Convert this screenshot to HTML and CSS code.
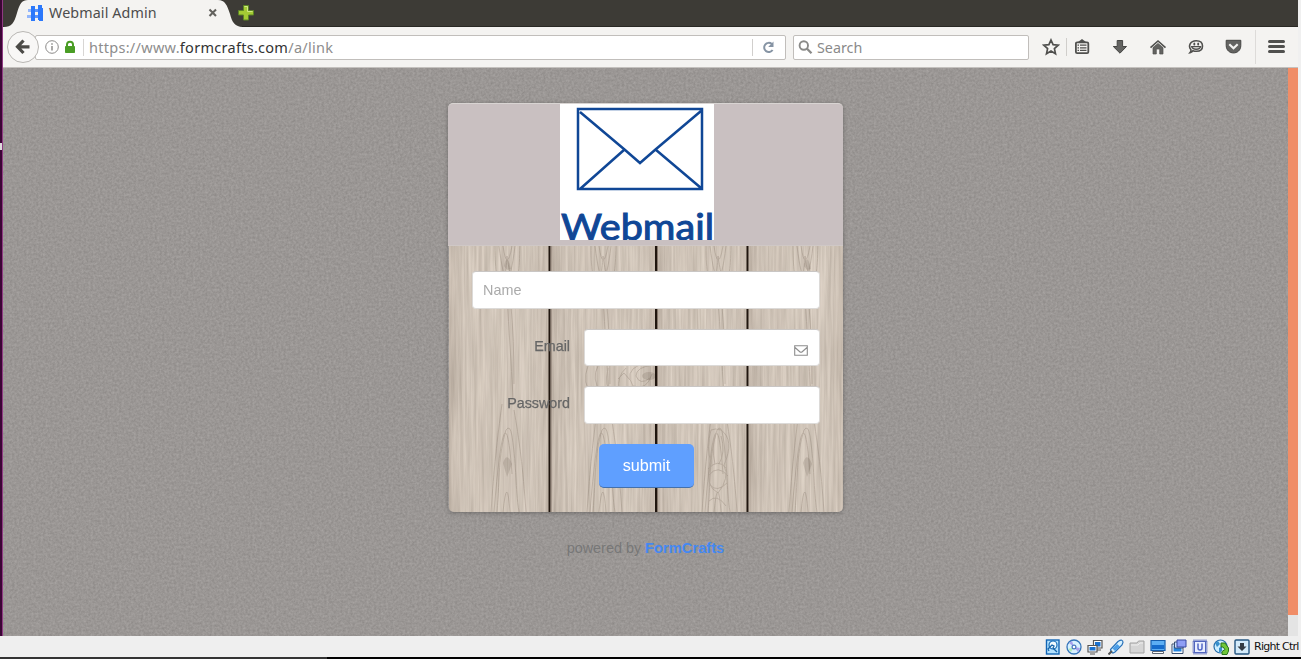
FILE: index.html
```html
<!DOCTYPE html>
<html lang="en">
<head>
<meta charset="utf-8">
<title>Desktop</title>
<link rel="stylesheet" href="styles.css">
</head>
<body>
<div class="screen">
  <div class="upper">
    <div class="launcher"><span class="launcher-arrow"></span></div>
    <div class="browser">
      <div class="tabs">
        <svg class="tab-shape" width="240" height="27" viewBox="0 0 240 27"><path d="M0 27C9 27 11 23 14 13C17 3 19 0 25 0H215C222 0 224 5 227 14C229 22 232 27 240 27Z" fill="#f4f3f1"/></svg>
        <div class="tab">
          <svg class="favicon" width="16" height="16" viewBox="0 0 16 16" shape-rendering="crispEdges"><path d="M1 4H16V7H1ZM0 10H15V13H0Z" fill="#94b7fb"/><path d="M4 1H8V16H4ZM11 0H15V15H11ZM12 3H16V16H12Z" fill="#2b78fb"/><path d="M8 4H11V7H8ZM8 10H11V13H8Z" fill="#5b95fc"/></svg>
          <span class="tab-title">Webmail Admin</span>
          <svg class="tab-close" width="10" height="10" viewBox="0 0 10 10"><path d="M1.5 1.500L8 8M8 1.500L1.500 8" stroke="#62615d" stroke-width="2.1"/></svg>
        </div>
        <svg class="plus" width="18" height="18" viewBox="0 0 18 18"><path d="M6.500 1.500H11.500V6.500H16.500V11H11.500V16H6.500V11H1.500V6.500H6.500Z" fill="#a4cb34" stroke="#5c8525"/><path d="M7.500 2.500H10.500V7.500H15.500" fill="none" stroke="#d0e884"/></svg>
      </div>
      <div class="toolbar">
        <div class="back"><svg width="18" height="18" viewBox="0 0 18 18"><path d="M9.500 2.500L3.500 8.800L9.500 15M4 8.800H15.500" fill="none" stroke="#4b4a47" stroke-width="3.2"/></svg></div>
        <div class="url">
          <svg width="14" height="14" viewBox="0 0 14 14"><circle cx="7" cy="7" r="6.3" fill="none" stroke="#8c8b89"/><path d="M7 6V10.500M7 3.300V4.800" stroke="#858482" stroke-width="1.4"/></svg>
          <svg class="lock" width="12" height="14" viewBox="0 0 12 14"><path d="M3 7V4.500C3 .7 9 .7 9 4.500V7" fill="none" stroke="#4a9d25" stroke-width="2"/><rect x="1" y="6" width="10" height="7" rx=".8" fill="#4a9d25"/></svg>
          <span class="address">https://www.<b>formcrafts.com</b>/a/link</span>
          <span class="reload"><svg width="15" height="15" viewBox="0 0 15 15"><path d="M10.800 4A4.600 4.600 0 1 0 11.600 10" fill="none" stroke="#8694a4" stroke-width="2"/><path d="M12.500 1.500V7H7.200Z" fill="#8694a4"/></svg></span>
        </div>
        <div class="search"><svg width="15" height="15" viewBox="0 0 15 15"><circle cx="5.800" cy="5.500" r="4.200" fill="none" stroke="#8a8a88" stroke-width="1.9"/><path d="M8.800 8.500L13.500 13.200" stroke="#8a8a88" stroke-width="2.3"/></svg><span>Search</span></div>
        <div class="actions">
          <svg width="18" height="18" viewBox="0 0 18 18"><path d="M9 2L11.100 6.700L16.200 7.200L12.400 10.600L13.500 15.800L9 13.100L4.500 15.800L5.600 10.600L1.800 7.200L6.900 6.700Z" fill="none" stroke="#50504e" stroke-width="1.7"/></svg>
          <i class="short-line"></i>
          <svg width="16" height="16" viewBox="0 0 16 16"><rect x="1.900" y="3.400" width="12.400" height="10.800" rx="1.2" fill="#f4f3f1" stroke="#50504e" stroke-width="1.8"/><path d="M4 3L8 0L12 3Z" fill="#50504e"/><path d="M3.500 6.200H5M6 6.200H12.500M3.500 8.800H5M6 8.800H12.500M3.500 11.400H5M6 11.400H12.500" stroke="#50504e" stroke-width="1.2"/></svg>
          <svg class="download" width="16" height="16" viewBox="0 0 16 16"><path d="M5.200 1.500H10.600V7.500H14.500L8 14.200L1.300 7.500H5.200Z" fill="#636361" stroke="#454543"/></svg>
          <svg class="home" width="18" height="16" viewBox="0 0 18 16"><path d="M1.500 8.700L9 2L16.500 8.700" fill="none" stroke="#50504e" stroke-width="1.6"/><path d="M4 8.600L9 4.400L14 8.600V15H10.700V10H7.300V15H4Z" fill="#636361" stroke="#50504e" stroke-width=".7"/></svg>
          <svg class="chat" width="16" height="16" viewBox="0 0 16 16"><path d="M8.200 1.800C12.500 1.800 14.500 4.200 14.500 7C14.500 10.500 12 12.300 8.400 12.300C7 12.300 6 12.100 5 11.700C4.400 12.900 3.600 13.400 2.100 13.600C2.900 12.700 3.200 11.700 2.800 10.500C.1 7.200 2 1.800 8.200 1.800Z" fill="#f4f3f1" stroke="#50504e" stroke-width="1.6"/><path d="M2.800 6.900H13.400Q12.800 11 8.200 11Q3.600 11 2.800 6.900Z" fill="#50504e"/><path d="M4.500 8.300H12Q8.200 10.800 4.500 8.300Z" fill="#f4f3f1"/><ellipse cx="6.300" cy="5.100" rx="1" ry="1.500" fill="#50504e"/><ellipse cx="10.200" cy="5.100" rx="1" ry="1.500" fill="#50504e"/></svg>
          <svg class="pocket" width="17" height="16" viewBox="0 0 17 16"><path d="M1.200 1.300H15.800V6.500C15.800 16.400 1.200 16.400 1.200 6.500Z" fill="#636361" stroke="#454543"/><path d="M4.300 5.300L8.500 9.200L12.700 5.300" fill="none" stroke="#f4f3f1" stroke-width="2.2"/></svg>
          <i class="tall-line"></i>
          <svg class="menu" width="17" height="16" viewBox="0 0 17 16"><path d="M1.500 2.500H15.500M1.500 7.500H15.500M1.500 12.500H15.500" stroke="#50504e" stroke-width="3" stroke-linecap="round"/></svg>
        </div>
      </div>
      <div class="view">
        <div class="page">
          <svg class="noise" width="1285" height="568"><defs><filter id="felt" x="0" y="0" width="100%" height="100%" color-interpolation-filters="sRGB"><feTurbulence type="fractalNoise" baseFrequency=".42" numOctaves="3" seed="8"/><feColorMatrix values=".13 0 0 0 .541  .13 0 0 0 .526  .13 0 0 0 .518  0 0 0 0 1"/></filter></defs><rect width="1285" height="568" filter="url(#felt)"/></svg>
          <div class="card">
            <div class="card-head">
              <svg class="logo" width="154" height="136" viewBox="0 0 154 136"><rect width="154" height="136" fill="#fff"/><path d="M18 5H142V85H18ZM20 8L64.500 45.500L80 59L95.500 45.500L141 7M64.500 45.500L20 85M95.500 45.500L141 84" fill="none" stroke="#104796" stroke-width="2.500"/><text x="1" y="136" textLength="153" lengthAdjust="spacingAndGlyphs" class="logo-text">Webmail</text></svg>
            </div>
            <div class="card-body">
              <svg class="wood" width="394" height="266" viewBox="0 0 394 266">
                <defs>
                  <filter id="grain" x="0" y="0" width="100%" height="100%" color-interpolation-filters="sRGB"><feTurbulence type="fractalNoise" baseFrequency=".36 .012" numOctaves="4" seed="5"/><feColorMatrix values=".18 0 0 0 .718  .18 0 0 0 .672  .18 0 0 0 .622  0 0 0 0 1"/></filter>
                  <linearGradient id="shade"><stop offset="0" stop-color="#716157" stop-opacity=".14"/><stop offset=".3" stop-color="#fff" stop-opacity=".02"/><stop offset=".8" stop-color="#fff" stop-opacity=".05"/><stop offset="1" stop-color="#716157" stop-opacity=".08"/></linearGradient>
                  <g id="arches"><path d="M-10 266C-7 230-9 210-1 184Q3 178 5 190C10 224 8 240 12 266M-16 266C-13 222-10 194-5 158M19 266C16 222 12 192 7 164M-4 266Q0 226 3 266M-13 266Q-2 130 5 228M-4 0Q0 28 5 0M-8 0Q0 65 8 0M-12 0C-12 50-2 48 0 10C5 46 12 48 13 0M0 52Q3 98 6 152M4 60Q7 92 7 138"/></g>
                </defs>
                <rect width="394" height="266" filter="url(#grain)"/>
                <path d="M0 0H100V266H0Z" fill="url(#shade)"/><path d="M102 0H206V266H102Z" fill="url(#shade)"/><path d="M208 0H298V266H208Z" fill="url(#shade)"/><path d="M300 0H394V266H300Z" fill="url(#shade)"/>
                <g fill="none" stroke="#756659" stroke-width=".9" opacity=".3">
                  <use href="#arches" x="58"/><use href="#arches" x="154"/><use href="#arches" x="269"/><use href="#arches" x="356"/>
                  <path d="M139 120Q132 137 144 150M149 120Q142 132 152 148M159 122Q155 142 163 146M177 122Q168 130 170 144M190 119Q175 126 184 140Q198 145 203 128M204 119Q187 121 187 130Q191 140 201 132M169 133L175 127L181 134"/>
                  <path d="M262 184Q257 201 262 217Q255 240 269 247Q281 232 275 219Q286 194 272 184Q266 182 262 184ZM267 188Q262 201 266 218M272 190Q277 206 270 218M259 223Q269 212 277 222M260 229Q269 218 279 230M261 239Q268 247 278 237M260 255Q268 247 277 260"/>
                </g>
                <g fill="#554639" opacity=".16"><path d="M55 20Q58 5 62 23L58 24ZM355 20Q358 5 362 23L358 24ZM54 217Q58 205 63 218L58 231ZM354 217Q358 205 363 218L358 231Z"/><ellipse cx="200" cy="130" rx="7" ry="4"/></g>
                <path d="M100.500 0V266M207 0V266M298.500 0V266" stroke="#20160f" stroke-width="2"/><path d="M102 0V266M208.500 0V266" stroke="#75665a" stroke-width=".8"/>
              </svg>
              <div class="form">
                <div class="field name">Name</div>
                <div class="row email"><span class="label">Email</span><div class="field"><svg width="14" height="11" viewBox="0 0 14 11"><path d="M.7.7H13.300V10.300H.7ZM1 2.500L5.500 6.500Q7 8 8.500 6.500L13 2.500" fill="none" stroke="#8d8d8d" stroke-width="1.1"/></svg></div></div>
                <div class="row password"><span class="label">Password</span><div class="field"></div></div>
                <div class="submit">submit</div>
              </div>
            </div>
          </div>
          <div class="powered">powered by <b>FormCrafts</b></div>
        </div>
        <div class="scroll"><div class="thumb"></div></div>
      </div>
    </div>
    <div class="edge"></div>
  </div>
  <div class="status">
    <svg width="16" height="16" viewBox="0 0 16 16"><rect x="1.500" y="1" width="12.500" height="14" fill="#b5e3ff" stroke="#1265b5" stroke-width="1.400"/><circle cx="8" cy="6" r="4" fill="#f0fbff" stroke="#146db9" stroke-width="1.200"/><path d="M4 12L3 10L7 6L9 7L8 9L12 13" fill="none" stroke="#1765aa" stroke-width="1.300"/></svg>
    <svg width="16" height="16" viewBox="0 0 16 16"><circle cx="8" cy="8" r="7" fill="#d8f1ff" stroke="#3475ba" stroke-width="1.300"/><path d="M8 8L3 4L6 2ZM8 8L14 9L12 13Z" fill="#a8a1ec"/><path d="M8 8L2 10L5 13Z" fill="#b0ebbd"/><circle cx="8" cy="8" r="1.900" fill="#fff" stroke="#4777c0" stroke-width="1.200"/></svg>
    <svg width="16" height="16" viewBox="0 0 16 16"><path d="M6.500 1.500H15V9H6.500ZM9 11H14" fill="#fff" stroke="#555" stroke-width="1.200"/><path d="M8 3H13.500V7.500H8Z" fill="#1971d0"/><path d="M1 6.500H10V13H1ZM3 15H8" fill="#fff" stroke="#555" stroke-width="1.200"/><path d="M2.500 8H8.500V11.500H2.500Z" fill="#1971d0"/></svg>
    <svg width="16" height="16" viewBox="0 0 16 16"><path d="M3 13L2.500 10.500L10 2.500Q15 -.5 15 3.500L14 6L7 13L5 14Z" fill="#d6f1ff" stroke="#2871b9" stroke-width="1.200"/><path d="M4.500 9.500L9 5L12 7.500L7 12Z" fill="#4b9ee8"/><path d="M.5 15.500L4 12" stroke="#555" stroke-width="2"/></svg>
    <svg width="16" height="16" viewBox="0 0 16 16"><path d="M1 14V4H8L9.500 2H15V14Z" fill="#d5d5d5" stroke="#a3a3a3"/><path d="M2 6H9L11 4H14" fill="none" stroke="#eee"/></svg>
    <svg width="16" height="16" viewBox="0 0 16 16"><path d="M1 1.500H15V11.500H1Z" fill="#5caef3" stroke="#155dac" stroke-width="1.200"/><path d="M2 6H14V10H2Z" fill="#156bcb"/><path d="M2.500 12.500H13.500V14.500H2.500Z" fill="#fff" stroke="#5c6470"/></svg>
    <svg width="16" height="16" viewBox="0 0 16 16"><path d="M1 5H12V14.500H1Z" fill="#fff" stroke="#394f70"/><path d="M2.500 6.500H10.500V12.500H2.500Z" fill="#2585de"/><path d="M3.500 3H12V9H3.500Z" fill="#c7dfff" stroke="#394f70"/><path d="M6 1H15V8H6Z" fill="#8e9ef5" stroke="#3849a1"/></svg>
    <svg width="16" height="16" viewBox="0 0 16 16"><rect x="1.500" y="1.500" width="13" height="13" fill="#e5edff" stroke="#4456b3" stroke-width="2" stroke-dasharray="1 1"/><rect x="2.500" y="2.500" width="11" height="11" fill="#e9eeff" stroke="#5265bd"/><path d="M6 4.500V9Q6 11 8 11Q10 11 10 9V4.500" fill="none" stroke="#5367c5" stroke-width="1.500"/></svg>
    <svg width="16" height="16" viewBox="0 0 16 16"><circle cx="7.500" cy="7.500" r="6.500" fill="#caedff" stroke="#286da9" stroke-width="1.200"/><path d="M2 4L5 2L7 5L4 8ZM6 9L9 7L9 12L6 14Z" fill="#378fcb"/><path d="M8 4V8H10L12 10.500L9 12.500V15.500H14L15.500 12V9L12 4Z" fill="#6fc638" stroke="#28751a"/></svg>
    <svg width="16" height="16" viewBox="0 0 16 16"><rect x="1" y="1" width="14" height="14" rx="1" fill="#d4ebfa" stroke="#245580" stroke-width="1.400"/><path d="M6 4H10V7.500H12.500L8 12L3.500 7.500H6Z" fill="#343b43"/></svg>
    <span class="host-key">Right Ctrl</span>
  </div>
  <div class="bottom"><span></span></div>
</div>
</body>
</html>
```

FILE: styles.css
```css
* { box-sizing: border-box; }
body { margin: 0; overflow: hidden; font-family: "Liberation Sans", Arial, sans-serif; }
svg { display: block; flex: none; }
.screen { width: 1301px; height: 659px; display: flex; flex-direction: column; background: #efefef; }
.upper { height: 636px; display: flex; }
.launcher { width: 3px; background: #3b0635; border-right: 1px solid #8e3a82; padding-top: 143px; }
.launcher-arrow { display: block; width: 2px; height: 7px; background: #dedbdd; }
.browser { width: 1295px; display: flex; flex-direction: column; }
.edge { width: 3px; background: #f0f0f0; }

.tabs { position: relative; height: 27px; background: #3d3b36; border-bottom: 1px solid #292824; display: flex; }
.tab-shape { position: absolute; left: 0; top: 0; }
.tab { position: relative; width: 233px; height: 26px; display: flex; align-items: center; padding-left: 24px; }
.tab-title { width: 164px; margin: -2px 0 0 6px; font: 14.3px "Noto Sans", sans-serif; letter-spacing: .12px; color: #4c4c4c; white-space: nowrap; }
.tab-close { margin-left: -5px; }
.plus { position: relative; margin: 4px 0 0 1px; }

.toolbar { height: 41px; background: #f4f3f1; border-bottom: 1px solid #c4c1be; display: flex; align-items: center; padding-left: 4px; }
.back { position: relative; z-index: 1; width: 32px; height: 32px; border: 1px solid #b9b7b4; border-radius: 50%; background: #f8f7f6; display: flex; align-items: center; justify-content: center; }
.url { width: 751px; height: 25px; margin-left: -4px; padding-left: 9px; background: #fff; border: 1px solid #c1bebb; border-radius: 2px; display: flex; align-items: center; }
.lock { margin-left: 5px; }
.address { margin-left: 7px; padding-left: 5px; border-left: 1px solid #d8d6d4; font: 14.5px/17px "Noto Sans", sans-serif; letter-spacing: .28px; color: #8d8d8d; white-space: nowrap; }
.address b { font-weight: 400; color: #333; }
.reload { width: 33px; height: 17px; margin-left: auto; border-left: 1px solid #d1cfcd; display: flex; align-items: center; padding-left: 8px; }
.search { width: 236px; height: 25px; margin-left: 7px; padding-left: 4px; background: #fff; border: 1px solid #c1bebb; border-radius: 2px; display: flex; align-items: center; gap: 4px; font: 14.3px "Noto Sans", sans-serif; color: #8a8a8a; }
.actions { display: flex; align-items: center; padding-left: 13px; height: 40px; }
.short-line { width: 1px; height: 18px; margin: 0 7px 0 6px; background: #d0cecb; }
.download { margin-left: 22px; }
.home { margin-left: 21px; }
.chat { margin-left: 21px; }
.pocket { margin-left: 21px; }
.tall-line { width: 1px; height: 34px; margin: 0 12px 0 13px; background: #dddbd9; }

.view { display: flex; height: 568px; }
.page { position: relative; width: 1285px; padding: 35px 0 0 445px; background: #9a9694; }
.noise { position: absolute; left: 0; top: 0; }
.scroll { width: 10px; background: #e4e4e4; }
.thumb { height: 547px; background: #f08d67; }
.card { position: relative; width: 395px; height: 409px; border-radius: 5px; box-shadow: 0 1px 4px rgba(0,0,0,.3); }
.card-head { height: 143px; background: #c9c0c1; border-top: 1px solid #d8d4d2; border-bottom: 1px solid #cfc8c6; border-radius: 5px 5px 0 0; padding-left: 112px; }
.logo-text { font: 400 36px Lato, sans-serif; fill: #104796; stroke: #104796; stroke-width: 1px; }
.card-body { position: relative; height: 266px; margin-left: 1px; border-radius: 0 0 5px 5px; overflow: hidden; }
.wood { position: absolute; left: 0; top: 0; }
.form { position: relative; padding: 25px 23px 0; display: flex; flex-direction: column; }
.field { background: #fff; border: 1px solid #dcdad8; border-top-color: #c9c6c4; border-radius: 4px; display: flex; align-items: center; }
.name { height: 38px; padding-left: 10px; color: #aaa; font-size: 14.4px; }
.row { display: flex; justify-content: flex-end; align-items: flex-start; }
.row .field { width: 236px; height: 37px; justify-content: flex-end; padding: 6px 11px 0 0; }
.email { margin-top: 20px; }
.password { margin-top: 20px; }
.password .field { height: 38px; }
.label { margin: 9px 14px 0 0; color: #666; font-size: 14.3px; line-height: 16px; -webkit-text-stroke: .25px #666; }
.submit { width: 95px; height: 44px; margin: 20px 0 0 127px; background: #5f9fff; border-bottom: 1px solid #4470aa; border-radius: 5px; color: #fff; font-size: 16.2px; line-height: 43px; text-align: center; }
.powered { position: relative; width: 395px; margin-top: 27px; text-align: center; color: #777; font-size: 14.4px; line-height: 18px; white-space: nowrap; }
.powered b { color: #4488f3; font-size: 14.7px; }

.status { height: 21px; display: flex; align-items: center; justify-content: flex-end; gap: 5px; padding-right: 1px; }
.host-key { width: 46px; margin-left: -1px; font: 11px "DejaVu Sans", sans-serif; letter-spacing: -.75px; white-space: nowrap; color: #111; }
.bottom { height: 2px; background: #000; }
.bottom span { display: block; width: 327px; height: 2px; background: #333; }
```
